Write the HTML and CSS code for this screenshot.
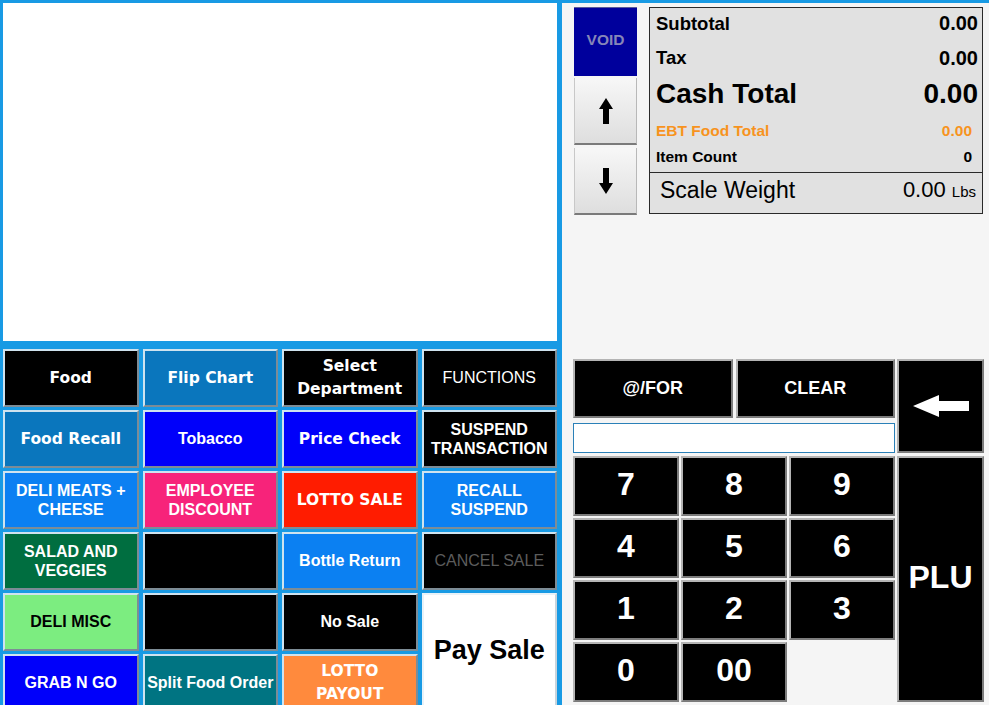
FILE: index.html
```html
<!DOCTYPE html>
<html>
<head>
<meta charset="utf-8">
<link rel="stylesheet" href="styles.css">
</head>
<body>
<div class="app">
  <div class="left">
    <div class="screen"></div>
    <div class="grid">
      <div class="btn t black">Food</div>
      <div class="btn t steel">Flip Chart</div>
      <div class="btn t black">Select<br>Department</div>
      <div class="btn reg black">FUNCTIONS</div>
      <div class="btn t steel">Food Recall</div>
      <div class="btn a blue">Tobacco</div>
      <div class="btn t blue">Price Check</div>
      <div class="btn a black">SUSPEND<br>TRANSACTION</div>
      <div class="btn a azure">DELI MEATS +<br>CHEESE</div>
      <div class="btn a pink">EMPLOYEE<br>DISCOUNT</div>
      <div class="btn t red">LOTTO SALE</div>
      <div class="btn a azure">RECALL<br>SUSPEND</div>
      <div class="btn a green">SALAD AND<br>VEGGIES</div>
      <div class="btn black"></div>
      <div class="btn a azure">Bottle Return</div>
      <div class="btn reg black dim">CANCEL SALE</div>
      <div class="btn a lime">DELI MISC</div>
      <div class="btn black"></div>
      <div class="btn a black">No Sale</div>
      <div class="btn pay">Pay Sale</div>
      <div class="btn a blue">GRAB N GO</div>
      <div class="btn a teal">Split Food Order</div>
      <div class="btn t orange">LOTTO<br>PAYOUT</div>
    </div>
  </div>
  <div class="right">
    <div class="top">
      <div class="side">
        <div class="void">VOID</div>
        <div class="gbtn up">
          <svg width="14" height="26" viewBox="0 0 14 26"><polygon points="7,0 14,11 10,11 10,26 4,26 4,11 0,11" fill="#000"/></svg>
        </div>
        <div class="gbtn down">
          <svg width="14" height="26" viewBox="0 0 14 26"><polygon points="7,26 14,15 10,15 10,0 4,0 4,15 0,15" fill="#000"/></svg>
        </div>
      </div>
      <div class="totals">
        <div class="row r-sub"><span>Subtotal</span><span>0.00</span></div>
        <div class="row r-tax"><span>Tax</span><span>0.00</span></div>
        <div class="row r-cash"><span>Cash Total</span><span>0.00</span></div>
        <div class="row r-ebt"><span>EBT Food Total</span><span>0.00</span></div>
        <div class="row r-cnt"><span>Item Count</span><span>0</span></div>
        <div class="row r-scale"><span>Scale Weight</span><span>0.00 <small>Lbs</small></span></div>
      </div>
    </div>
    <div class="keypad">
      <div class="kleft">
        <div class="krow">
          <div class="kbtn ktop">@/FOR</div>
          <div class="kbtn ktop">CLEAR</div>
        </div>
        <div class="input"></div>
        <div class="nums">
          <div class="kbtn num">7</div>
          <div class="kbtn num">8</div>
          <div class="kbtn num">9</div>
          <div class="kbtn num">4</div>
          <div class="kbtn num">5</div>
          <div class="kbtn num">6</div>
          <div class="kbtn num">1</div>
          <div class="kbtn num">2</div>
          <div class="kbtn num">3</div>
          <div class="kbtn num">0</div>
          <div class="kbtn num">00</div>
        </div>
      </div>
      <div class="kright">
        <div class="kbtn back">
          <svg width="56" height="22" viewBox="0 0 56 22"><polygon points="0,11 26,0 26,6 56,6 56,16 26,16 26,22" fill="#fff"/></svg>
        </div>
        <div class="kbtn plu">PLU</div>
      </div>
    </div>
  </div>
</div>
</body>
</html>
```
FILE: styles.css
```css
* { box-sizing: border-box; }
html, body { margin: 0; padding: 0; }
body {
  width: 989px;
  height: 705px;
  overflow: hidden;
  font-family: "Liberation Sans", Arial, sans-serif;
  background: #f5f5f5;
}
.app {
  display: flex;
  width: 989px;
  height: 705px;
}
.left {
  width: 562px;
  height: 705px;
  background: #189ae4;
  padding: 3px 5px 0 3px;
  flex: none;
}
.screen {
  height: 338px;
  background: #fff;
}
.grid {
  margin-top: 8px;
  display: grid;
  grid-template-columns: repeat(4, 1fr);
  grid-auto-rows: 58px;
  column-gap: 4px;
  row-gap: 3px;
}
.btn {
  display: flex;
  align-items: center;
  justify-content: center;
  text-align: center;
  color: #fff;
  border: 2px solid;
  border-color: #cfe3ef #7d8c96 #7d8c96 #cfe3ef;
  font-weight: bold;
}
.btn.t {
  font-family: "DejaVu Sans", Verdana, sans-serif;
  font-size: 15.5px;
  line-height: 23px;
}
.btn.a {
  font-family: "Liberation Sans", Arial, sans-serif;
  font-size: 16px;
  line-height: 19.5px;
}
.btn.reg {
  font-family: "Liberation Sans", Arial, sans-serif;
  font-weight: normal;
  font-size: 16px;
}
.black { background: #000; }
.steel { background: #0a76bd; }
.blue { background: #0000fa; }
.azure { background: #0b80f2; }
.pink { background: #f7237a; }
.red { background: #ff1c00; }
.green { background: #006e40; }
.lime { background: #7ced80; color: #000; }
.teal { background: #007482; }
.orange { background: #ff8a3d; }
.dim { color: #5c5c5c; }
.pay {
  grid-row: span 2;
  background: #fff;
  color: #000;
  font-size: 27px;
  padding-bottom: 4px;
  border-color: #e8f2f8 #c8d4dc #c8d4dc #e8f2f8;
}

.right {
  width: 427px;
  height: 705px;
  background: #f5f5f5;
  border-top: 3px solid #189ae4;
  flex: none;
}
.top {
  display: flex;
  padding: 4px 0 0 12px;
  height: 212px;
}
.side {
  width: 63px;
  display: flex;
  flex-direction: column;
}
.void {
  height: 69px;
  background: #00009c;
  border-top: 1px solid #5a5a9a;
  color: #8686b8;
  font-weight: bold;
  font-size: 15.5px;
  padding-bottom: 5px;
  display: flex;
  align-items: center;
  justify-content: center;
}
.gbtn {
  height: 67px;
  background: linear-gradient(#f7f7f7, #dedede);
  border-bottom: 2px solid #7a7a7a;
  border-left: 1px solid #c8c8c8;
  border-right: 1px solid #b8b8b8;
  display: flex;
  align-items: center;
  justify-content: center;
}
.up { margin-top: 2px; }
.down { margin-top: 3px; }
.totals {
  margin-left: 12px;
  width: 334px;
  height: 207px;
  background: #e1e1e1;
  border: 1px solid #2a2a2a;
  display: flex;
  flex-direction: column;
  color: #000;
  font-weight: bold;
}
.row {
  display: flex;
  justify-content: space-between;
  align-items: center;
  padding: 0 4px 0 6px;
  flex: none;
}
.r-sub { height: 31px; font-size: 18.5px; }
.r-sub span:last-child { font-size: 20px; }
.r-tax { height: 38px; font-size: 18.5px; }
.r-tax span:last-child { font-size: 20px; }
.r-cash { height: 34px; font-size: 28px; }
.r-ebt { height: 40px; font-size: 15.5px; color: #f7931e; padding-right: 10px; }
.r-cnt { height: 12px; font-size: 15.5px; padding-right: 10px; margin-bottom: 9px; }
.r-scale {
  height: 40px;
  border-top: 1px solid #2a2a2a;
  font-weight: normal;
  font-size: 23px;
  padding: 0 6px 5px 10px;
}
.r-scale span:last-child { font-size: 22px; }
.r-scale small { font-size: 15px; }

.keypad {
  display: flex;
  margin-top: 144px;
  padding-left: 11px;
  gap: 2px;
}
.kleft {
  width: 322px;
  display: flex;
  flex-direction: column;
}
.kright {
  width: 87px;
  display: flex;
  flex-direction: column;
  gap: 3px;
}
.kbtn {
  background: #000;
  color: #fff;
  font-weight: bold;
  display: flex;
  align-items: center;
  justify-content: center;
  border: 2px solid;
  border-color: #b4b4b4 #7c7c7c #7c7c7c #b4b4b4;
}
.krow {
  display: flex;
  gap: 3px;
}
.ktop {
  flex: 1;
  height: 59px;
  font-size: 18px;
}
.input {
  margin-top: 5px;
  height: 30px;
  background: #fff;
  border: 1px solid #2a80b8;
}
.nums {
  margin-top: 3px;
  display: grid;
  grid-template-columns: repeat(3, 1fr);
  grid-auto-rows: 60px;
  gap: 2px;
}
.num { font-size: 32px; padding-bottom: 3px; }
.back { height: 94px; }
.plu { height: 246px; font-size: 32px; padding-bottom: 3px; }
```
